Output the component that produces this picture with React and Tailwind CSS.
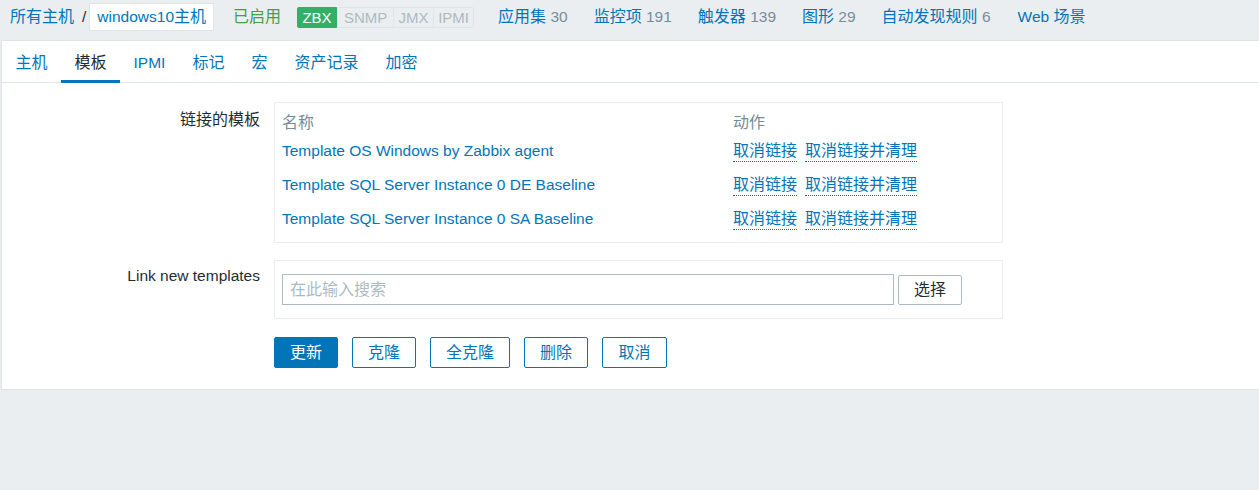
import * as React from "react";

const zh = "text-[16px]";

const NAV = [
  { label: "应用集", count: "30" },
  { label: "监控项", count: "191" },
  { label: "触发器", count: "139" },
  { label: "图形", count: "29" },
  { label: "自动发现规则", count: "6" },
];

const TABS = ["主机", "模板", "IPMI", "标记", "宏", "资产记录", "加密"];

const TEMPLATES = [
  "Template OS Windows by Zabbix agent",
  "Template SQL Server Instance 0 DE Baseline",
  "Template SQL Server Instance 0 SA Baseline",
];

const BUTTONS = [
  { label: "更新", w: "w-[64px]", primary: true },
  { label: "克隆", w: "w-[64px]" },
  { label: "全克隆", w: "w-[80px]" },
  { label: "删除", w: "w-[64px]" },
  { label: "取消", w: "w-[65px]" },
];

const Badge = ({ children, className }) => (
  <span
    className={`h-[21px] flex items-center justify-center border text-[15px] leading-none ${className}`}
  >
    {children}
  </span>
);

export default function App() {
  return (
    <div className="min-h-[490px] bg-[#ebeef0] text-[15.5px] text-[#1f2c33] font-['Liberation_Sans','Noto_Sans_CJK_SC',sans-serif]">
      {/* header / breadcrumbs */}
      <div className="flex items-center h-[34px] pl-[10px] mb-[6px] whitespace-nowrap">
        <a className={`text-[#0275b8] ${zh}`}>所有主机</a>
        <span className="ml-[8px] mr-[3px]">/</span>
        <span className="h-[28px] flex items-center px-[7px] bg-white border border-[#dfe4e7] rounded-[2px] text-[#0275b8]">
          windows10<span className={zh}>主机</span>
        </span>
        <span className={`ml-[19px] text-[#429e47] ${zh}`}>已启用</span>
        <div className="flex ml-[16px]">
          <Badge className="w-[40px] bg-[#34af67] border-[#34af67] text-white rounded-l-[2px]">ZBX</Badge>
          <Badge className="w-[57px] bg-[#ebeef0] border-[#dfe4e7] text-[#acbbc2]">SNMP</Badge>
          <Badge className="w-[40px] bg-[#ebeef0] border-[#dfe4e7] border-l-0 text-[#acbbc2]">JMX</Badge>
          <Badge className="w-[40px] bg-[#ebeef0] border-[#dfe4e7] border-l-0 text-[#acbbc2] rounded-r-[2px]">IPMI</Badge>
        </div>
        <div className="flex items-center ml-[24px] gap-[26px]">
          {NAV.map((n) => (
            <a key={n.label} className="text-[#0275b8]">
              <span className={zh}>{n.label}</span>
              <span className="text-[#768d99]"> {n.count}</span>
            </a>
          ))}
          <a className="text-[#0275b8] ml-[1px]">
            Web <span className={zh}>场景</span>
          </a>
        </div>
      </div>

      {/* main panel */}
      <div className="ml-px bg-white border border-r-0 border-[#dfe4e7] h-[350px]">
        <div className="flex border-b border-[#dfe4e7] h-[42px]">
          {TABS.map((t, i) => (
            <a
              key={t}
              className={`h-[42px] -mb-px flex items-center px-[13.5px] pt-[4px] border-b-[3px] ${
                i === 1
                  ? "border-[#0275b8] text-[#1f2c33]"
                  : "border-transparent text-[#0275b8]"
              } ${t === "IPMI" ? "" : zh}`}
            >
              {t}
            </a>
          ))}
        </div>

        <div className="pt-[19px] flex flex-col gap-[17px]">
          {/* linked templates */}
          <div className="flex">
            <div className={`w-[258px] text-right pt-[8px] leading-[20px] ${zh}`}>链接的模板</div>
            <div className="ml-[14px] w-[729px] border border-[#ebeef0] pl-[7px] pt-[10px] pb-[12px]">
              <div className="flex leading-[20px] text-[#768d99]">
                <span className={`w-[451px] ${zh}`}>名称</span>
                <span className={zh}>动作</span>
              </div>
              {TEMPLATES.map((t, i) => (
                <div
                  key={t}
                  className={`flex leading-[20px] ${i === 0 ? "mt-[8px]" : "mt-[13px]"}`}
                >
                  <a className="w-[451px] text-[#0275b8]">{t}</a>
                  <div className={`flex gap-[8px] text-[#0275b8] ${zh}`}>
                    <a className="border-b border-dotted border-[#0275b8]">取消链接</a>
                    <a className="border-b border-dotted border-[#0275b8]">取消链接并清理</a>
                  </div>
                </div>
              ))}
            </div>
          </div>

          {/* link new templates */}
          <div className="flex">
            <div className="w-[258px] text-right pt-[6px] leading-[20px]">Link new templates</div>
            <div className="ml-[14px] w-[729px] border border-[#ebeef0] pl-[7px] pt-[13px] pb-[13px] flex items-center">
              <div className="w-[612px] h-[31px] border border-[#acbbc2] flex items-center pl-[7px]">
                <span className={`text-[#acbbc2] ${zh}`}>在此输入搜索</span>
              </div>
              <button
                type="button"
                className={`ml-[4px] w-[64px] h-[30px] bg-white border border-[#acbbc2] rounded-[2px] ${zh}`}
              >
                选择
              </button>
            </div>
          </div>

          {/* form buttons */}
          <div className="flex gap-[14px] pl-[272px] mt-px">
            {BUTTONS.map((b) => (
              <button
                key={b.label}
                type="button"
                className={`${b.w} h-[31px] border border-[#0275b8] rounded-[2px] ${zh} ${
                  b.primary ? "bg-[#0275b8] text-white" : "bg-white text-[#0275b8]"
                }`}
              >
                {b.label}
              </button>
            ))}
          </div>
        </div>
      </div>
    </div>
  );
}
